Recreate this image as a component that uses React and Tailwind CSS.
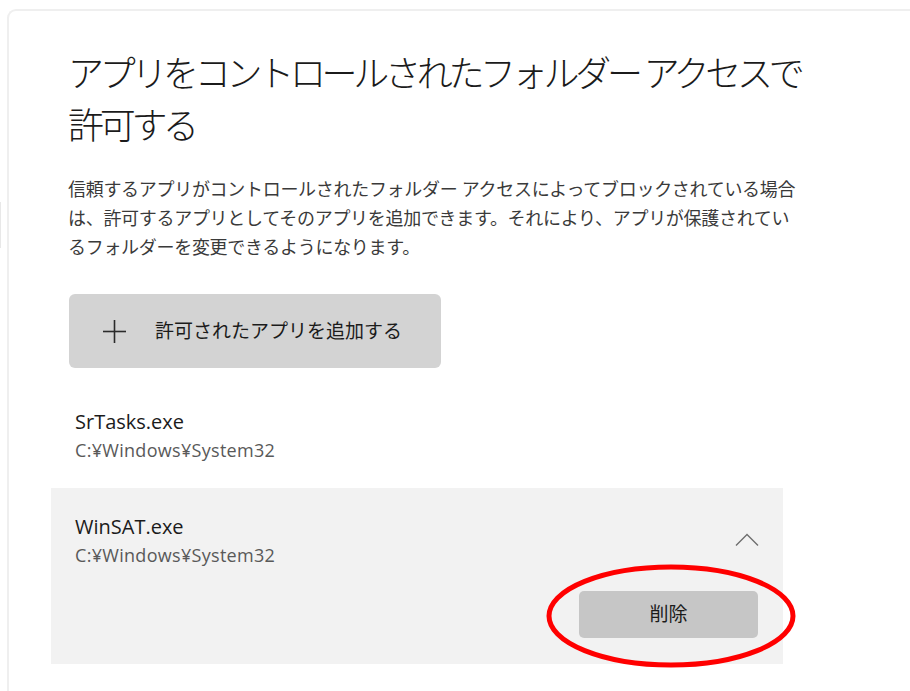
import React from "react";

const FONT = {
  fontFamily: '"Open Sans", "Noto Sans CJK JP", sans-serif',
};

function ChevronUp() {
  return (
    <svg width="24" height="14" viewBox="0 0 24 14" fill="none">
      <polyline
        points="1,12.5 12,1.5 23,12.5"
        stroke="#6e6e6e"
        strokeWidth="1.4"
      />
    </svg>
  );
}

function PlusIcon() {
  return (
    <svg width="23" height="23" viewBox="0 0 23 23" fill="none">
      <line x1="11.5" y1="0" x2="11.5" y2="23" stroke="#2b2b2b" strokeWidth="1.6" />
      <line x1="0" y1="11.5" x2="23" y2="11.5" stroke="#2b2b2b" strokeWidth="1.6" />
    </svg>
  );
}

function AppRow({ name, path }) {
  return (
    <div className="pl-[24px] pt-[8px] pb-[24px]">
      <div className="text-[20px] leading-[28px] text-[#1b1b1b]">{name}</div>
      <div className="text-[18px] leading-[28px] tracking-[0.3px] text-[#595959]">{path}</div>
    </div>
  );
}

function ExpandedRow({ name, path }) {
  return (
    <div className="relative w-[732px] h-[176px] bg-[#f2f2f2] pl-[24px] pt-[25px]">
      <div className="flex items-start justify-between pr-[24px]">
        <div>
          <div className="text-[20px] leading-[28px] text-[#1b1b1b]">{name}</div>
          <div className="text-[18px] leading-[28px] tracking-[0.3px] text-[#595959]">{path}</div>
        </div>
        <div className="mt-[20px]">
          <ChevronUp />
        </div>
      </div>
      <div className="flex justify-end pr-[25px] mt-[22px]">
        <button className="w-[179px] h-[47px] rounded-[5px] bg-[#c6c6c6] text-[19px] text-[#1b1b1b]">
          削除
        </button>
      </div>

      {/* annotation circle */}
      <svg
        className="absolute left-[495px] top-[76px] pointer-events-none"
        width="250"
        height="104"
        viewBox="0 0 250 104"
        fill="none"
      >
        <ellipse cx="125" cy="52" rx="122" ry="49" stroke="#ff0000" strokeWidth="5" />
      </svg>
    </div>
  );
}

export default function App() {
  return (
    <div className="min-h-screen bg-white flex overflow-hidden" style={FONT}>
      <div className="w-[7px] shrink-0">
        <div className="mt-[202px] h-[46px] w-px bg-[#e8e8e8]" />
      </div>

      <div className="flex-1 mt-[9px] border-l-2 border-t-2 border-[#efefef] rounded-tl-[9px] pl-[42px] pt-[37px]">
        <h1 className="ml-[17px] text-[36px] leading-[52px] tracking-[-4.3px] font-light text-[#1b1b1b] whitespace-nowrap">
          アプリをコントロールされたフォルダー アクセスで
          <br />
          許可する
        </h1>

        <p className="ml-[17px] mt-[23px] text-[18px] leading-[29px] tracking-[-0.3px] text-[#3a3a3a] whitespace-nowrap">
          信頼するアプリがコントロールされたフォルダー アクセスによってブロックされている場合
          <br />
          は、許可するアプリとしてそのアプリを追加できます。それにより、アプリが保護されてい
          <br />
          るフォルダーを変更できるようになります。
        </p>

        <button className="ml-[18px] mt-[32px] w-[372px] h-[74px] rounded-[6px] bg-[#d3d3d3] flex items-center pl-[34px]">
          <PlusIcon />
          <span className="ml-[29px] text-[19px] text-[#1b1b1b]">
            許可されたアプリを追加する
          </span>
        </button>

        <div className="mt-[32px]">
          <AppRow name="SrTasks.exe" path="C:¥Windows¥System32" />
          <ExpandedRow name="WinSAT.exe" path="C:¥Windows¥System32" />
        </div>
      </div>
    </div>
  );
}
